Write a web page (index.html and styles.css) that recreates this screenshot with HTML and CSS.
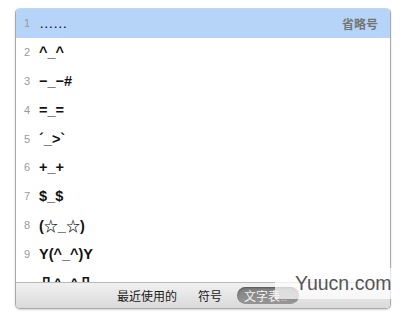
FILE: index.html
```html
<!DOCTYPE html>
<html lang="zh">
<head>
<meta charset="utf-8">
<link rel="stylesheet" href="styles.css">
</head>
<body>
<div class="panel">
  <div class="list">
    <div class="row active"><span class="num">1</span><span class="emo dots">……</span><span class="desc">省略号</span></div>
    <div class="row"><span class="num">2</span><span class="emo">^_^</span></div>
    <div class="row"><span class="num">3</span><span class="emo">−_−#</span></div>
    <div class="row"><span class="num">4</span><span class="emo">=_=</span></div>
    <div class="row"><span class="num">5</span><span class="emo">´_&gt;`</span></div>
    <div class="row"><span class="num">6</span><span class="emo">+_+</span></div>
    <div class="row"><span class="num">7</span><span class="emo">$_$</span></div>
    <div class="row"><span class="num">8</span><span class="emo">(<span class="star">☆</span>_<span class="star">☆</span>)</span></div>
    <div class="row"><span class="num">9</span><span class="emo">Y(^_^)Y</span></div>
    <div class="row"><span class="num"></span><span class="emo">凸^_^凸</span></div>
  </div>
  <div class="bar">
    <span class="tab">最近使用的</span>
    <span class="tab tab-sym">符号</span>
    <span class="pill">文字表<span class="ell">...</span></span>
  </div>
</div>
<div class="watermark">Yuucn.com</div>
</body>
</html>
```
FILE: styles.css
```css
html, body {
  margin: 0;
  background: #ffffff;
}
body {
  padding: 8px 0 0 15px;
  width: 406px;
  height: 315px;
  box-sizing: border-box;
  position: relative;
  overflow: hidden;
  font-family: "Liberation Sans", "Noto Sans CJK SC", sans-serif;
}
.panel {
  width: 376px;
  height: 301px;
  box-sizing: border-box;
  border: 1px solid #a9a9a9;
  border-top-color: #c4d6ee;
  border-radius: 5px;
  display: flex;
  flex-direction: column;
  overflow: hidden;
  background: #ffffff;
  box-shadow: 0 1px 2px rgba(0,0,0,0.18);
}
.list {
  flex: 1;
  overflow: hidden;
}
.row {
  height: 28.8px;
  display: flex;
  align-items: center;
  padding: 0 12px 0 8px;
}
.row.active {
  background: #b5d4f8;
}
.num {
  width: 15px;
  flex: none;
  font-size: 11px;
  color: #9a9a9a;
}
.emo {
  flex: 1;
  font-size: 14.5px;
  font-weight: bold;
  color: #111111;
  font-family: "Liberation Sans", "DejaVu Sans", "Noto Sans CJK SC", sans-serif;
}
.star {
  font-family: "Noto Sans CJK SC", sans-serif;
  font-weight: bold;
  font-size: 14px;
  color: #111111;
}
.emo.dots {
  font-weight: normal;
  letter-spacing: -0.5px;
}
.desc {
  font-size: 12px;
  font-weight: bold;
  color: #747474;
  font-family: "Noto Sans CJK SC", sans-serif;
}
.bar {
  height: 25px;
  flex: none;
  border-top: 1px solid #b9b9b9;
  background: linear-gradient(#f1f1f1, #dadada);
  display: flex;
  align-items: center;
  padding-left: 101px;
  font-family: "Noto Sans CJK SC", sans-serif;
  font-size: 12px;
  color: #1a1a1a;
}
.tab-sym {
  margin-left: 21px;
}
.pill {
  margin-left: 15px;
  width: 62px;
  height: 17px;
  box-sizing: border-box;
  border-radius: 9px;
  background: linear-gradient(#7f7f7f, #979797);
  box-shadow: inset 0 1px 2px rgba(0,0,0,0.35);
  color: #f4f4f4;
  padding-left: 7px;
  display: flex;
  align-items: center;
  font-size: 12px;
  line-height: 17px;
}
.ell {
  font-size: 7px;
  margin-left: 1px;
  margin-top: 5px;
  font-family: "Liberation Sans", sans-serif;
}
.watermark {
  position: absolute;
  left: 275px;
  top: 268px;
  width: 121px;
  height: 31px;
  background: rgba(255,255,255,0.72);
  color: #555555;
  font-family: "Liberation Sans", sans-serif;
  font-size: 19.5px;
  line-height: 31px;
  padding-left: 20px;
  box-sizing: border-box;
  white-space: nowrap;
}
```
